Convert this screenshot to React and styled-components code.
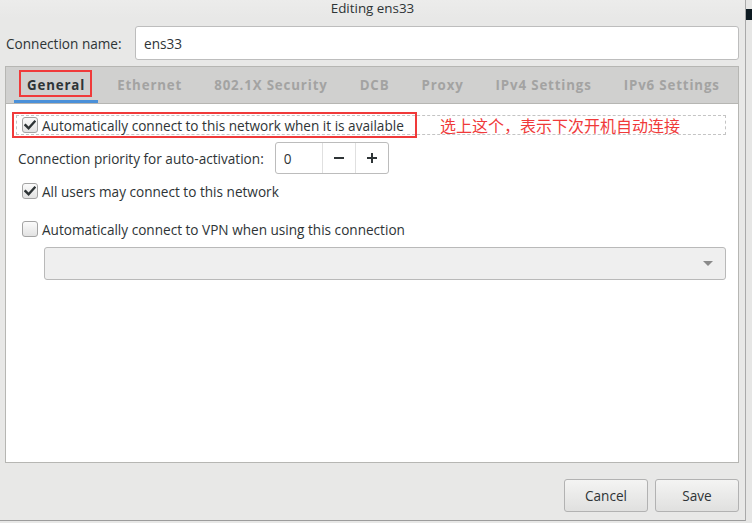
import React from "react";
import styled, { createGlobalStyle } from "styled-components";

const GlobalStyle = createGlobalStyle`
  html, body {
    margin: 0;
    padding: 0;
    background: #e8e8e7;
  }
  body {
    font-family: "Open Sans", "Noto Sans", sans-serif;
    font-size: 13.6px;
    color: #2e3436;
  }
`;

const TABS = [
  "General",
  "Ethernet",
  "802.1X Security",
  "DCB",
  "Proxy",
  "IPv4 Settings",
  "IPv6 Settings",
];

const CheckIcon = () => (
  <svg width="12" height="12" viewBox="0 0 12 12">
    <path
      d="M1.5 6.2 L4.6 9.3 L10.6 2.6"
      fill="none"
      stroke="#2e3436"
      strokeWidth="2.4"
      strokeLinecap="square"
    />
  </svg>
);

const Checkbox = ({ checked }) => (
  <Box>{checked && <CheckIcon />}</Box>
);

const App = () => {
  return (
    <>
      <GlobalStyle />
      <Screen>
        <Dialog>
          <TitleBar>Editing ens33</TitleBar>
          <Body>
            <NameRow>
              <Label>Connection name:</Label>
              <Entry>ens33</Entry>
            </NameRow>
            <Notebook>
              <TabBar>
                {TABS.map((t, i) => (
                  <Tab key={t} active={i === 0}>
                    {t}
                    {i === 0 && <RedMark />}
                  </Tab>
                ))}
              </TabBar>
              <Page>
                <FocusRow>
                  <Checkbox checked />
                  <span>Automatically connect to this network when it is available</span>
                  <RedBox />
                  <Note>选上这个，表示下次开机自动连接</Note>
                </FocusRow>
                <PriorityRow>
                  <span>Connection priority for auto-activation:</span>
                  <Spin>
                    <SpinValue>0</SpinValue>
                    <SpinButton>
                      <svg width="12" height="12" viewBox="0 0 12 12">
                        <path d="M1 6 H11" stroke="#2e3436" strokeWidth="2" />
                      </svg>
                    </SpinButton>
                    <SpinButton>
                      <svg width="12" height="12" viewBox="0 0 12 12">
                        <path d="M1 6 H11 M6 1 V11" stroke="#2e3436" strokeWidth="2" />
                      </svg>
                    </SpinButton>
                  </Spin>
                </PriorityRow>
                <CheckRow>
                  <Checkbox checked />
                  <span>All users may connect to this network</span>
                </CheckRow>
                <CheckRow top={20}>
                  <Checkbox />
                  <span>Automatically connect to VPN when using this connection</span>
                </CheckRow>
                <Combo>
                  <svg width="10" height="6" viewBox="0 0 10 6">
                    <path d="M0 0 H10 L5 5 Z" fill="#8a8a8a" />
                  </svg>
                </Combo>
              </Page>
            </Notebook>
            <Actions>
              <Button>Cancel</Button>
              <Button>Save</Button>
            </Actions>
          </Body>
        </Dialog>
        <Behind>
          <DarkBlock />
        </Behind>
      </Screen>
    </>
  );
};

const Screen = styled.div`
  width: 752px;
  height: 523px;
  display: flex;
  overflow: hidden;
  background: #e8e8e7;
`;

const Dialog = styled.div`
  width: 745px;
  height: 520px;
  display: flex;
  flex-direction: column;
  border-right: 1px solid #a9a9a9;
  border-bottom: 1px solid #9c9c9c;
  background: #e8e8e7;
`;

const Behind = styled.div`
  flex: 1;
  background: #e6e6e5;
`;

const DarkBlock = styled.div`
  margin-top: 9px;
  height: 11px;
  background: #0e1b22;
`;

const TitleBar = styled.div`
  height: 18px;
  line-height: 17px;
  text-align: center;
  background: linear-gradient(#ececeb, #e8e8e7);
  color: #2e3436;
  font-size: 13.4px;
`;

const Body = styled.div`
  flex: 1;
  display: flex;
  flex-direction: column;
  padding: 8px 6px 0 5px;
`;

const NameRow = styled.div`
  display: flex;
  align-items: center;
  height: 34px;
`;

const Label = styled.div`
  width: 129px;
  padding-left: 1px;
`;

const Entry = styled.div`
  flex: 1;
  box-sizing: border-box;
  height: 34px;
  display: flex;
  align-items: center;
  padding-left: 8px;
  background: #fff;
  border: 1px solid #bdbdbd;
  border-radius: 3px;
`;

const Notebook = styled.div`
  margin-top: 6px;
  height: 395px;
  display: flex;
  flex-direction: column;
  border: 1px solid #b6b6b3;
  background: #fff;
`;

const TabBar = styled.div`
  height: 36px;
  display: flex;
  padding-left: 5px;
  background: #d0d0cf;
  border-bottom: 1px solid #b6b6b3;
`;

const Tab = styled.div`
  position: relative;
  flex-shrink: 0;
  white-space: nowrap;
  margin: 0 3px;
  padding: 0 13px;
  display: flex;
  align-items: center;
  font-size: 13.3px;
  font-weight: bold;
  letter-spacing: 0.85px;
  color: ${(p) => (p.active ? "#2e3436" : "#a3a3a2")};
  box-shadow: ${(p) => (p.active ? "inset 0 -3px 0 #4a90d9" : "none")};
`;

const RedMark = styled.div`
  position: absolute;
  left: 5px;
  right: 6px;
  top: 3px;
  height: 27px;
  box-sizing: border-box;
  border: 2px solid #f03a3a;
`;

const Page = styled.div`
  flex: 1;
  display: flex;
  flex-direction: column;
  padding: 11px 12px 0 10px;
`;

const Box = styled.div`
  width: 14px;
  height: 14px;
  margin-right: 4px;
  flex-shrink: 0;
  display: flex;
  align-items: center;
  justify-content: center;
  border: 1px solid #a4a4a4;
  border-radius: 3px;
  background: linear-gradient(#fbfbfb, #e2e2e2);
`;

const FocusRow = styled.div`
  position: relative;
  height: 18px;
  display: flex;
  align-items: center;
  padding-left: 5px;
  border: 1px dashed #c4c4c4;
`;

const RedBox = styled.div`
  position: absolute;
  left: -5px;
  top: -4px;
  width: 405px;
  height: 26px;
  box-sizing: border-box;
  border: 2px solid #f03a3a;
`;

const Note = styled.div`
  position: absolute;
  left: 423px;
  top: -1px;
  line-height: 20px;
  font-family: "Noto Sans CJK SC", sans-serif;
  font-size: 16px;
  color: #f03a3a;
`;

const PriorityRow = styled.div`
  margin-top: 7px;
  display: flex;
  align-items: center;
  gap: 11px;
  padding-left: 2px;
`;

const Spin = styled.div`
  height: 30px;
  display: flex;
  border: 1px solid #bcbcbc;
  border-radius: 3px;
  background: #fff;
`;

const SpinValue = styled.div`
  width: 38px;
  padding-left: 8px;
  display: flex;
  align-items: center;
`;

const SpinButton = styled.div`
  width: 32px;
  display: flex;
  align-items: center;
  justify-content: center;
  border-left: 1px solid #e0e0e0;
`;

const CheckRow = styled.div`
  margin-top: ${(p) => p.top || 8}px;
  display: flex;
  align-items: center;
  height: 18px;
  padding-left: 6px;
`;

const Combo = styled.div`
  margin: 9px 0 0 28px;
  height: 31px;
  display: flex;
  align-items: center;
  justify-content: flex-end;
  padding-right: 12px;
  border: 1px solid #b9b9b9;
  border-radius: 3px;
  background: #efefef;
`;

const Actions = styled.div`
  margin-top: 16px;
  display: flex;
  justify-content: flex-end;
  gap: 7px;
`;

const Button = styled.div`
  width: 84px;
  height: 33px;
  box-sizing: border-box;
  display: flex;
  align-items: center;
  justify-content: center;
  border: 1px solid #b2b2b2;
  border-radius: 3px;
  background: linear-gradient(#f4f4f3, #e0e0df);
  color: #2e3436;
`;

export default App;
